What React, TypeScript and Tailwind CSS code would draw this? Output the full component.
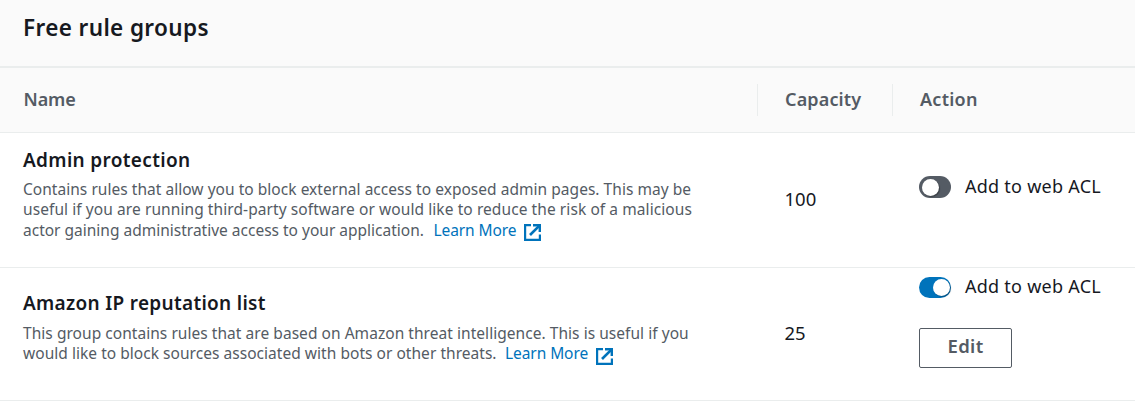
import { useState } from "react";

function ExternalIcon({ className }: { className: string }) {
  return (
    <svg className={`ml-[8px] size-[17px] shrink-0 ${className}`} viewBox="0 0 17 17" fill="none" stroke="#0073bb" strokeWidth="2.2">
      <path d="M7 1.1H1.1v14.8h14.8v-5.4" />
      <path d="M9 1.2H15.8V8" strokeWidth="2.4" />
      <path d="M15.2 1.8L6 11" strokeWidth="2.6" />
    </svg>
  );
}

function LearnMore({ iconClass }: { iconClass: string }) {
  return (
    <a href="#" className="flex text-[#0073bb]">
      <span className="tracking-[-0.08px]">Learn More</span>
      <ExternalIcon className={iconClass} />
    </a>
  );
}

function Toggle({ initial }: { initial: boolean }) {
  const [on, setOn] = useState(initial);
  return (
    <label className="flex h-[24px] items-start">
      <button
        type="button"
        role="switch"
        aria-checked={on}
        onClick={() => setOn(!on)}
        className={
          on
            ? "mt-[3px] flex h-[21px] w-[32px] items-center justify-end rounded-full bg-[#0073bb] px-[1.5px]"
            : "mt-[2px] flex h-[22px] w-[32px] items-center rounded-full bg-[#545b64] px-[2.5px]"
        }
      >
        <span className="size-[17px] rounded-full bg-white shadow-[1px_1px_1px_rgba(0,0,0,0.3)]" />
      </button>
      <span className="ml-[14px] text-[18px] leading-[24px] tracking-[0.26px]">Add to web ACL</span>
    </label>
  );
}

export default function App() {
  return (
    <main className="h-[411px] w-[1135px] overflow-hidden bg-white font-['Noto_Sans',sans-serif] whitespace-nowrap text-[#16191f]">
      <header className="h-[68px] border-b-2 border-[#eaeded] bg-[#fafafa] pt-[12px] pl-[23px]">
        <h2 className="text-[22.5px] leading-[32px] font-semibold tracking-[0.38px]">Free rule groups</h2>
      </header>

      <div className="flex h-[65px] border-b border-[#eaeded] bg-[#fafafa] pt-[16px] text-[18px] leading-[24px] font-semibold text-[#545b64]">
        <div className="w-[757px] pt-[3px] pl-[23.5px] tracking-[-0.1px]">Name</div>
        <div className="h-[32px] w-[135px] border-l border-[#eaeded] pt-[3px] pl-[27px] tracking-[0.15px]">Capacity</div>
        <div className="h-[32px] border-l border-[#eaeded] pt-[3px] pl-[27px] tracking-[0.25px]">Action</div>
      </div>

      <section className="flex h-[135px] border-b border-[#eaeded]">
        <div className="w-[784.5px] pt-[15px] pl-[23px]">
          <h3 className="text-[19px] leading-[24px] font-semibold tracking-[0.33px]">Admin protection</h3>
          <div className="mt-[7px] text-[15.5px] leading-[20px] text-[#545b64]">
            <p className="tracking-[0.035px]">Contains rules that allow you to block external access to exposed admin pages. This may be</p>
            <p className="tracking-[0.08px]">useful if you are running third-party software or would like to reduce the risk of a malicious</p>
            <div className="mt-px flex gap-[9.5px]">
              <p>actor gaining administrative access to your application.</p>
              <LearnMore iconClass="mt-[4px]" />
            </div>
          </div>
        </div>
        <div className="w-[134.5px] pt-[54px] text-[18.5px] leading-[24px]">100</div>
        <div className="pt-[41px]">
          <Toggle initial={false} />
        </div>
      </section>

      <section className="flex h-[133px] border-b border-[#eaeded]">
        <div className="w-[784.5px] pt-[23px] pl-[23px]">
          <h3 className="text-[19px] leading-[24px] font-semibold tracking-[0.3px]">Amazon IP reputation list</h3>
          <div className="mt-[8px] text-[15.5px] leading-[20px] text-[#545b64]">
            <p className="tracking-[0.045px]">This group contains rules that are based on Amazon threat intelligence. This is useful if you</p>
            <div className="flex gap-[8.5px]">
              <p className="tracking-[0.035px]">would like to block sources associated with bots or other threats.</p>
              <LearnMore iconClass="mt-[5px]" />
            </div>
          </div>
        </div>
        <div className="w-[134.5px] pt-[53px] text-[18.5px] leading-[24px]">25</div>
        <div className="pt-[6px]">
          <Toggle initial={true} />
          <button
            type="button"
            className="mt-[30px] flex h-[40px] w-[93px] justify-center rounded-[2px] border border-[#545b64] pt-[5px] text-[18.5px] leading-[24px] font-semibold tracking-[0.35px] text-[#545b64]"
          >
            Edit
          </button>
        </div>
      </section>
    </main>
  );
}
